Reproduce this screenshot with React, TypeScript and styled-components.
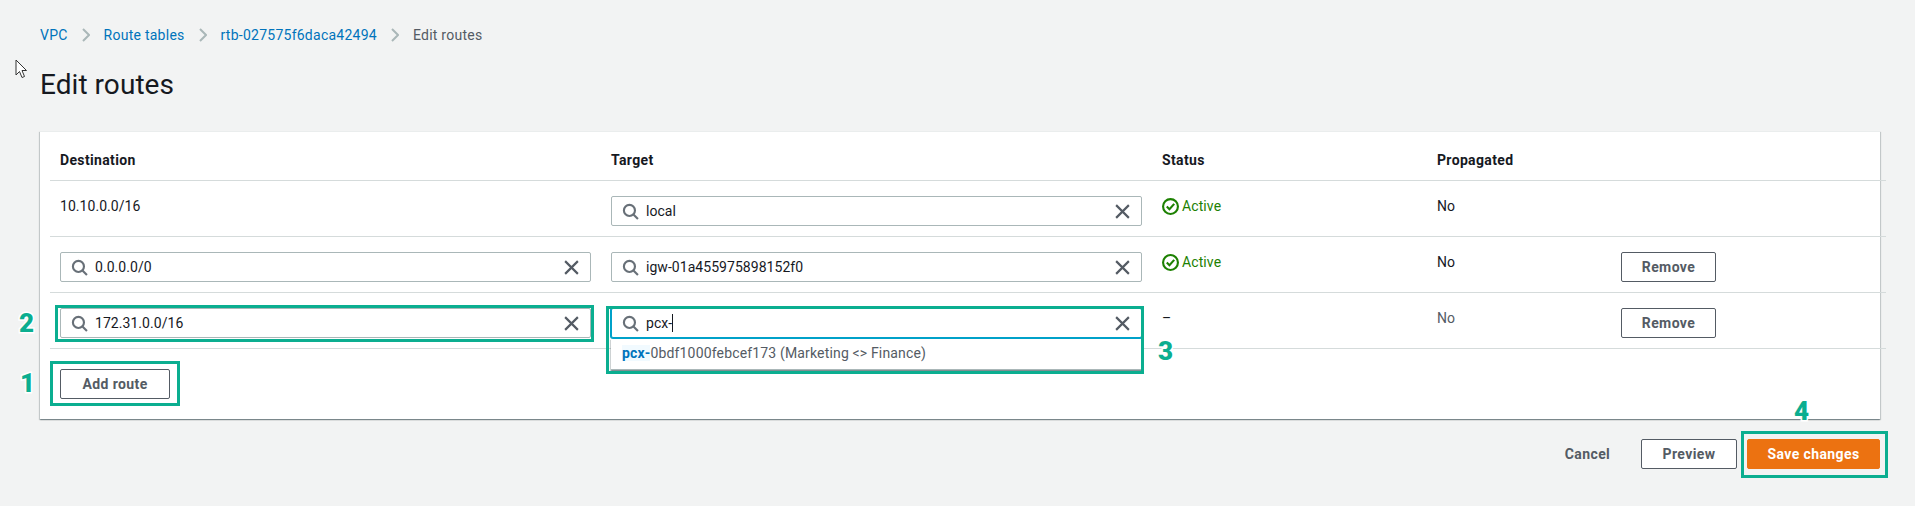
import React from "react";
import styled, { createGlobalStyle } from "styled-components";

const Global = createGlobalStyle`
  html, body { margin: 0; padding: 0; background: #f2f3f3; }
  body { font-family: Roboto, "Noto Sans", sans-serif; color: #16191f; font-size: 14px; line-height: 20px; letter-spacing: 0.05px; }
`;

const Page = styled.div`
  position: relative;
  width: 1915px;
  height: 506px;
  overflow: hidden;
  padding: 25px 35px 0 40px;
  box-sizing: border-box;
`;

const Crumbs = styled.nav`
  display: flex;
  align-items: center;
  gap: 14px;
  height: 20px;
  letter-spacing: 0.25px;
`;
const CrumbLink = styled.span`
  color: #0073bb;
`;
const CrumbCurrent = styled.span`
  color: #545b64;
`;
const Title = styled.h1`
  margin: 22px 0 0;
  font-size: 28px;
  font-weight: 400;
  line-height: 36px;
  height: 64px;
  color: #16191f;
`;
const Card = styled.section`
  background: #fff;
  height: 288px;
  box-shadow: 0 1px 1px 0 rgba(0, 28, 36, 0.3), 1px 1px 1px 0 rgba(0, 28, 36, 0.15), -1px 1px 1px 0 rgba(0, 28, 36, 0.15);
  padding-left: 10px;
  border-top: 1px solid #eaeded;
  box-sizing: border-box;
`;
const Row = styled.div<{ $h: number }>`
  display: grid;
  grid-template-columns: 551px 551px 275px 184px 1fr;
  height: ${(p) => p.$h}px;
  width: 1836px;
  padding-left: 10px;
  box-sizing: border-box;
  border-bottom: 1px solid #d5dbdb;
`;
const HeadCell = styled.div`
  font-weight: 700;
  padding-top: 18px;
  letter-spacing: 0.35px;
`;
const Cell = styled.div<{ $muted?: boolean }>`
  padding-top: 15px;
  color: ${(p) => (p.$muted ? "#545b64" : "#16191f")};
`;
const Field = styled.div<{ $focus?: boolean }>`
  position: relative;
  width: 531px;
  height: 30px;
  display: flex;
  align-items: center;
  padding: 0 10px;
  gap: 7px;
  box-sizing: border-box;
  background: #fff;
  border: 1px solid ${(p) => (p.$focus ? "#00a1c9" : "#aab7b8")};
  border-radius: 2px;
  ${(p) => (p.$focus ? "box-shadow: 0 0 0 1px #00a1c9;" : "")}
`;
const FieldText = styled.span`
  flex: 1;
  white-space: nowrap;
`;
const Caret = styled.span`
  display: inline-block;
  width: 1px;
  height: 18px;
  background: #16191f;
  vertical-align: -4px;
`;
const Status = styled.div`
  display: flex;
  align-items: center;
  gap: 3px;
  color: #1d8102;
  letter-spacing: 0.1px;
`;
const Dropdown = styled.div`
  position: absolute;
  left: -1px;
  right: -1px;
  top: 30px;
  height: 31px;
  background: #fff;
  border-bottom: 1px solid #aab7b8;
  box-shadow: 0 1px 1px 0 rgba(0, 28, 36, 0.3), 1px 1px 1px 0 rgba(0, 28, 36, 0.15), -1px 1px 1px 0 rgba(0, 28, 36, 0.15);
  padding: 4px 11px 0;
  box-sizing: border-box;
  color: #545b64;
  white-space: nowrap;
  letter-spacing: 0.16px;
  z-index: 2;
`;
const Match = styled.span`
  color: #0073bb;
  font-weight: 700;
  background: #f1faff;
`;
const Button = styled.button<{ $w: number; $primary?: boolean; $plain?: boolean }>`
  width: ${(p) => p.$w}px;
  height: 30px;
  padding: 0;
  box-sizing: border-box;
  border-radius: 2px;
  font: 700 14px/20px Roboto, "Noto Sans", sans-serif;
  letter-spacing: 0.4px;
  border: 1px solid ${(p) => (p.$primary ? "#ec7211" : p.$plain ? "transparent" : "#545b64")};
  background: ${(p) => (p.$primary ? "#ec7211" : p.$plain ? "transparent" : "#fff")};
  color: ${(p) => (p.$primary ? "#fff" : "#545b64")};
`;
const RemoveSlot = styled.div`
  padding: 15px 0 0 0;
`;
const AddRow = styled.div`
  padding: 20px 0 0 10px;
`;
const Footer = styled.footer`
  display: flex;
  justify-content: flex-end;
  align-items: center;
  gap: 10px;
  margin-top: 20px;
`;
const Mark = styled.div<{ $x: number; $y: number; $w: number; $h: number }>`
  position: absolute;
  left: ${(p) => p.$x}px;
  top: ${(p) => p.$y}px;
  width: ${(p) => p.$w}px;
  height: ${(p) => p.$h}px;
  box-sizing: border-box;
  border: 3px solid #0bae90;
  z-index: 3;
  pointer-events: none;
`;
const Digit = styled.span<{ $x: number; $y: number }>`
  position: absolute;
  left: ${(p) => p.$x}px;
  top: ${(p) => p.$y}px;
  font: 900 26px/30px Roboto, sans-serif;
  color: #0bae90;
  -webkit-text-stroke: 3px #fff;
  paint-order: stroke fill;
  z-index: 4;
`;
const Pointer = styled.svg`
  position: absolute;
  left: 15px;
  top: 59px;
`;

const Search = () => (
  <svg width="17" height="17" viewBox="0 0 16 16" fill="none" stroke="#687078" strokeWidth="2">
    <circle cx="7" cy="7" r="5.2" />
    <path d="M10.8 10.8 15 15" />
  </svg>
);
const Clear = () => (
  <svg width="17" height="17" viewBox="0 0 16 16" fill="none" stroke="#545b64" strokeWidth="2">
    <path d="M2 2 14 14M14 2 2 14" />
  </svg>
);
const Check = () => (
  <svg width="17" height="17" viewBox="0 0 16 16" fill="none" stroke="#1d8102" strokeWidth="2">
    <circle cx="8" cy="8" r="7" />
    <path d="M4.5 8 7 10.5 11.5 5.5" />
  </svg>
);
const Chevron = () => (
  <svg width="8" height="16" viewBox="0 0 8 16" fill="none" stroke="#aab7b8" strokeWidth="2">
    <path d="M1 2 7 8 1 14" />
  </svg>
);

const SearchField: React.FC<{ children: React.ReactNode; focus?: boolean; menu?: React.ReactNode }> = ({ children, focus, menu }) => (
  <Field $focus={focus}>
    <Search />
    <FieldText>{children}</FieldText>
    <Clear />
    {menu}
  </Field>
);

const Active = () => (
  <Status>
    <Check />
    <span>Active</span>
  </Status>
);

export default function App() {
  return (
    <Page>
      <Global />
      <Crumbs>
        <CrumbLink>VPC</CrumbLink>
        <Chevron />
        <CrumbLink>Route tables</CrumbLink>
        <Chevron />
        <CrumbLink>rtb-027575f6daca42494</CrumbLink>
        <Chevron />
        <CrumbCurrent>Edit routes</CrumbCurrent>
      </Crumbs>
      <Title>Edit routes</Title>
      <Card>
        <Row $h={49}>
          <HeadCell>Destination</HeadCell>
          <HeadCell>Target</HeadCell>
          <HeadCell>Status</HeadCell>
          <HeadCell>Propagated</HeadCell>
          <HeadCell />
        </Row>
        <Row $h={56}>
          <Cell>10.10.0.0/16</Cell>
          <Cell><SearchField>local</SearchField></Cell>
          <Cell><Active /></Cell>
          <Cell>No</Cell>
          <Cell />
        </Row>
        <Row $h={56}>
          <Cell><SearchField>0.0.0.0/0</SearchField></Cell>
          <Cell><SearchField>igw-01a455975898152f0</SearchField></Cell>
          <Cell><Active /></Cell>
          <Cell>No</Cell>
          <RemoveSlot><Button $w={95}>Remove</Button></RemoveSlot>
        </Row>
        <Row $h={56}>
          <Cell><SearchField>172.31.0.0/16</SearchField></Cell>
          <Cell>
            <SearchField
              focus
              menu={<Dropdown><Match>pcx-</Match>0bdf1000febcef173 (Marketing &lt;&gt; Finance)</Dropdown>}
            >
              pcx-<Caret />
            </SearchField>
          </Cell>
          <Cell>–</Cell>
          <Cell $muted>No</Cell>
          <RemoveSlot><Button $w={95}>Remove</Button></RemoveSlot>
        </Row>
        <AddRow><Button $w={110}>Add route</Button></AddRow>
      </Card>
      <Footer>
        <Button $w={87} $plain>Cancel</Button>
        <Button $w={96}>Preview</Button>
        <Button $w={133} $primary>Save changes</Button>
      </Footer>
      <Pointer width="12" height="20" viewBox="0 0 12 20">
        <path d="M1 1 V16 L4.5 12.5 L7 18.5 L9.5 17.5 L7 11.5 H11.5 Z" fill="#fff" stroke="#333" strokeWidth="1" />
      </Pointer>
      <Mark $x={50} $y={361} $w={130} $h={45} />
      <Mark $x={55} $y={305} $w={539} $h={37} />
      <Mark $x={606} $y={306} $w={538} $h={68} />
      <Mark $x={1741} $y={431} $w={147} $h={47} />
      <Digit $x={20} $y={368}>1</Digit>
      <Digit $x={19} $y={308}>2</Digit>
      <Digit $x={1158} $y={336}>3</Digit>
      <Digit $x={1794} $y={396}>4</Digit>
    </Page>
  );
}
